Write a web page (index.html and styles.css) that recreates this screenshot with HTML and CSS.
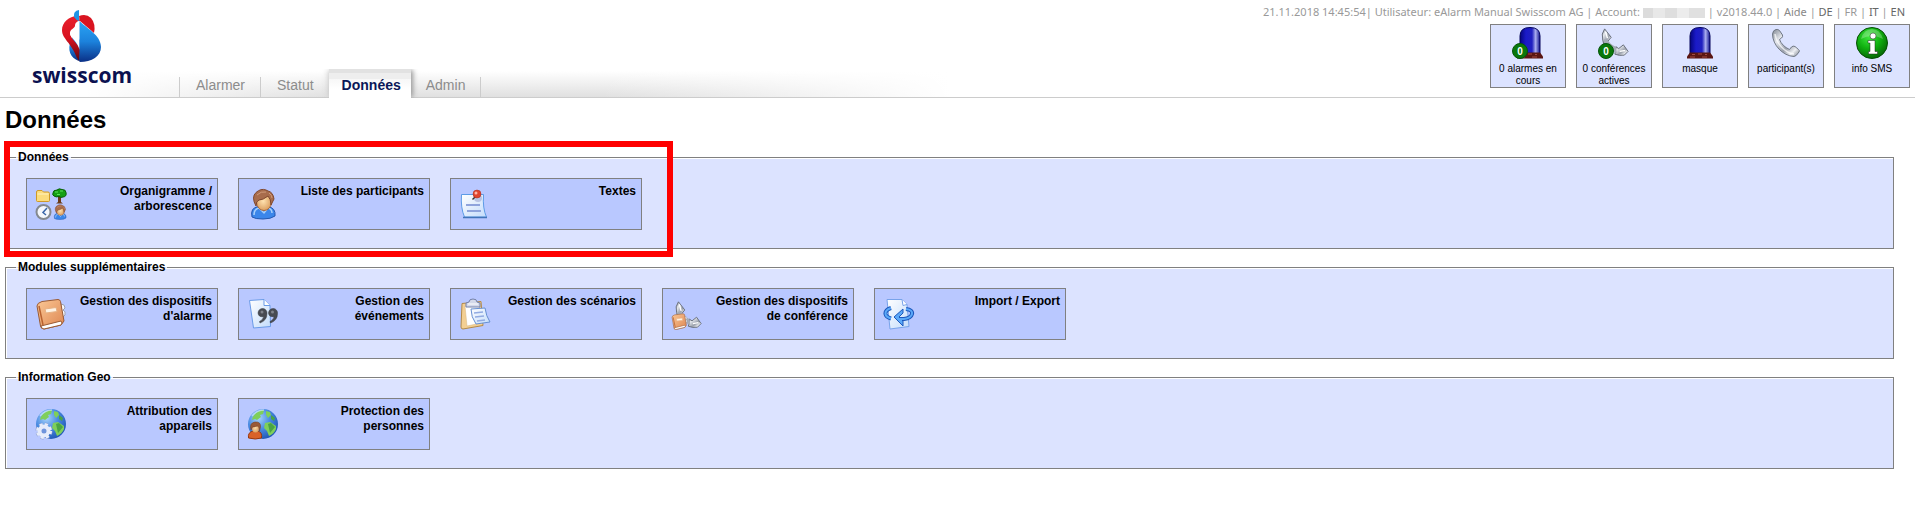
FILE: index.html
```html
<!DOCTYPE html>
<html lang="fr">
<head>
    <meta charset="UTF-8">
    <meta name="viewport" content="width=device-width, initial-scale=1.0">
    <title>eAlarm - Données</title>
    <link rel="stylesheet" href="styles.css">
</head>
<body>
    <!-- shared icon shapes -->
    <svg class="defs" width="0" height="0" aria-hidden="true">
        <defs>
            <linearGradient id="logoBlue" x1="0" y1="0" x2="0" y2="1"><stop offset="0" stop-color="#2aa5f5"/><stop offset=".5" stop-color="#1c82dc"/><stop offset="1" stop-color="#0a2f86"/></linearGradient>
            <linearGradient id="logoRed" x1="0" y1="0" x2="0" y2="1"><stop offset="0" stop-color="#e8202c"/><stop offset=".5" stop-color="#d8121f"/><stop offset="1" stop-color="#5a0710"/></linearGradient>
            <linearGradient id="lampBlue"><stop offset="0" stop-color="#06067e"/><stop offset=".3" stop-color="#1a1ac8"/><stop offset=".6" stop-color="#2020c0"/><stop offset=".78" stop-color="#a8acee"/><stop offset="1" stop-color="#10108c"/></linearGradient>
            <radialGradient id="green" cx=".4" cy=".3" r=".75"><stop offset="0" stop-color="#3fe83f"/><stop offset=".5" stop-color="#10b010"/><stop offset="1" stop-color="#046004"/></radialGradient>
            <linearGradient id="steel" x1="0" y1="0" x2="1" y2="1"><stop offset="0" stop-color="#7f8691"/><stop offset=".3" stop-color="#e4e7ec"/><stop offset=".6" stop-color="#9aa0ab"/><stop offset=".8" stop-color="#eceef2"/><stop offset="1" stop-color="#767c88"/></linearGradient>
            <linearGradient id="paper" x1="0" y1="0" x2="1" y2="1"><stop offset="0" stop-color="#ffffff"/><stop offset="1" stop-color="#c3dcfb"/></linearGradient>
            <linearGradient id="orange" x1="0" y1="0" x2="1" y2="1"><stop offset="0" stop-color="#fbc896"/><stop offset="1" stop-color="#dd8550"/></linearGradient>
            <radialGradient id="skin" cx=".45" cy=".45" r=".6"><stop offset="0" stop-color="#ffe2b0"/><stop offset="1" stop-color="#d99a5a"/></radialGradient>
            <radialGradient id="sea" cx=".35" cy=".3" r=".75"><stop offset="0" stop-color="#a9d4fb"/><stop offset=".5" stop-color="#4a8ce2"/><stop offset="1" stop-color="#1f56b4"/></radialGradient>

            <symbol id="lamp" viewBox="0 0 32 32">
                <path d="M6 27V9Q6 .500 16 .500T26 9v18z" fill="url(#lampBlue)" stroke="#04045c"/>
                <path d="M6 25.500h20l3 4v2H3v-2z" fill="#5a1612"/>
                <path d="M8 27.500h3M14 27h4M21 27.500h2M6 30h5M18 30h5" stroke="#a34a40"/>
            </symbol>
            <symbol id="phone" viewBox="0 0 32 32">
                <path d="M6 2.500Q3 3 2.500 7C2.500 18 13 29 24 29.500q2 0 5-4.500 1-1.500-.500-2.500l-3.500-3q-2-1-3.500.500l-2 2.500Q12 19 9.500 12.500l2-1.500q1.500-1 1-3L9.500 3.500Q8 2 6 2.500z" fill="url(#steel)" stroke="#707885"/>
                <path d="M5 7c1 9 10 19 19 20" fill="none" stroke="#fff" stroke-width="1.500" opacity=".7"/>
            </symbol>
            <symbol id="handset" viewBox="0 0 32 32">
                <path d="M6 2l7 9-5 6-3 1-1-4q-2-7 2-12z" fill="url(#steel)" stroke="#636a76"/>
                <path d="M18 21l3 2 5-4 5 7-4 4q-5 1-10-1z" fill="url(#steel)" stroke="#636a76"/>
                <path d="M5 13q1 9 14 15l-1-7q-7-3-9-8z" fill="#a5abb6"/>
                <path d="M7 5l2 7M22 26l6-1" stroke="#fff" stroke-width="1.500"/>
            </symbol>
            <symbol id="zero" viewBox="0 0 16 16">
                <circle cx="8" cy="8" r="7.500" fill="#0a780a" stroke="#04560a"/>
                <text x="8" y="11.500" text-anchor="middle" class="badge-text">0</text>
            </symbol>
            <symbol id="person" viewBox="0 0 32 32">
                <path d="M5 29Q3 20 11 18.500h10Q29 20 28 28q-4 3-12 3T5 29z" fill="#3b86ea" stroke="#2458b0"/>
                <path d="M7 27q0-6 5-7l5 5 4-5q4 1 4 5" fill="none" stroke="#a7cffb" stroke-width="1.500"/>
                <ellipse cx="17" cy="14" rx="7.500" ry="8.500" fill="url(#skin)" stroke="#a8683c"/>
                <path d="M9 18Q4 9 9 4.500 14 0 19 2l2 1q5 1 6 8l-3 6q0-6-3-9-5 4-9 4-3 1-3 6z" fill="#a86c4c" stroke="#80482e"/>
                <path d="M10 7q4-4 9-3M22 5q3 2 3 5" fill="none" stroke="#cf9a7a"/>
            </symbol>
            <symbol id="globe" viewBox="0 0 32 32">
                <circle cx="16" cy="16" r="15" fill="url(#sea)"/>
                <path d="M8 6Q12 2 17 2l-1 4-3 1 1 2-4 3-2-1-3 1Q5 9 8 6zM19 3l4 1 1 3-3 3-2-3zM18 15l5-1 6 4v3q-2 5-7 7l-2-5-3-3z" fill="#7fcf5a"/>
                <path d="M24 7l4 3-1 3-3-2zM21 16l3-1 4 4-5 6z" fill="#4aa544"/>
                <path d="M5 8q5-6 12-6" fill="none" stroke="#e2f3ff" stroke-width="1.500" opacity=".6"/>
            </symbol>
            <symbol id="book" viewBox="0 0 32 32">
                <path d="M26 6q4 0 4 4l-2 2q3 1 2 5l-3 3z" fill="#f7f8fc" stroke="#9a9fae"/>
                <path d="M7 3.500L23 1.500q2 0 2.500 2L29 23l-3 4-17 4q-3 0-3.500-3L2 8q0-3 5-4.500z" fill="url(#orange)" stroke="#9a5a34"/>
                <path d="M6 28l20-5 1 2-1 2-17 4q-3-.500-3-3z" fill="#fff" stroke="#9a5a34"/>
                <path d="M4 8l4 19" stroke="#b96230" stroke-width="1.500"/>
                <path d="M10 11l11-1.500 1 4-11 1.500z" fill="#fff3e4" stroke="#e6b184"/>
            </symbol>
        </defs>
    </svg>

    <header class="header">
        <a class="logo" href="#" aria-label="swisscom">
            <svg width="40" height="54" viewBox="0 0 40 54">
                <path d="M8 33C5 44 12 50 18 51V30L12 24Q9 28 8 33z" fill="url(#logoBlue)"/>
                <path d="M17 6C8 5 0 12 0 20c0 9 9 12 15 28l2 3 1-12C16 34 8 28 8 23c0-4 4-4 5-7 0-3 2-5 5-5z" fill="url(#logoRed)"/>
                <path d="M17.500 12C14 14 15 17 14 19c-2 2-6 2-6 5 1 4 8 8 9.500 16z" fill="#fff"/>
                <path d="M18 11L17 6q7-3 12 2 5 6 3 15z" fill="#d91420"/>
                <path d="M12 7q-1-6 5-7v11q-3-1-5-4z" fill="#1f95e6"/>
                <path d="M17.500 11C24 18 39 25 39 37c0 9-9 15-21.500 15z" fill="url(#logoBlue)"/>
            </svg>
            <span class="logo-text">swisscom</span>
        </a>

        <nav class="tabs">
            <a class="tab" href="#">Alarmer</a>
            <a class="tab" href="#">Statut</a>
            <a class="tab active" href="#">Données</a>
            <a class="tab" href="#">Admin</a>
        </nav>

        <div class="header-right">
            <div class="status">
                <span class="date">21.11.2018 14:45:54</span>|
                <span>Utilisateur: eAlarm Manual Swisscom AG</span> |
                <span>Account:</span> <span class="masked"></span> |
                <span>v2018.44.0</span> |
                <a href="#" class="help">Aide</a> |
                <a href="#">DE</a> | <span>FR</span> | <a href="#">IT</a> | <a href="#">EN</a>
            </div>
            <div class="shortcuts">
                <button class="shortcut" type="button">
                    <svg width="32" height="32" viewBox="0 0 32 32"><use href="#lamp" x="2" width="32" height="32"/><use href="#zero" x="0" y="16" width="16" height="16"/></svg>
                    <span>0 alarmes en cours</span>
                </button>
                <button class="shortcut" type="button">
                    <svg width="32" height="32" viewBox="0 0 32 32"><use href="#handset" x="1" width="30" height="30"/><use href="#zero" x="0" y="16" width="16" height="16"/></svg>
                    <span>0 conférences actives</span>
                </button>
                <button class="shortcut" type="button">
                    <svg width="32" height="32"><use href="#lamp"/></svg>
                    <span>masque</span>
                </button>
                <button class="shortcut" type="button">
                    <svg width="32" height="32"><use href="#phone"/></svg>
                    <span>participant(s)</span>
                </button>
                <button class="shortcut" type="button">
                    <svg width="32" height="32" viewBox="0 0 32 32">
                        <circle cx="16" cy="16" r="15.500" fill="url(#green)" stroke="#055005"/>
                        <path d="M5 12Q8 2 16 2t11 10Q16 6 5 12z" fill="#fff" opacity=".25"/>
                        <circle cx="17" cy="9" r="3" fill="#fff" stroke="#222" stroke-width=".500"/>
                        <path d="M12 13.500h7v11h2.500V27h-9v-2.500H14V16h-2z" fill="#fff" stroke="#222" stroke-width=".500"/>
                    </svg>
                    <span>info SMS</span>
                </button>
            </div>
        </div>
    </header>

    <main class="content">
        <h1>Données</h1>

        <fieldset class="group">
            <legend>Données</legend>
            <div class="tiles">
                <button class="tile" type="button">
                    <svg width="32" height="32" viewBox="0 0 32 32">
                        <path d="M1.500 4q0-1.500 1.500-1.500h4L8.500 4H13q1.500 0 1.500 1.500v7q0 1-1 1h-11q-1 0-1-1z" fill="#fbdc7c" stroke="#cf9a28"/>
                        <path d="M2.500 6h11" stroke="#fff2c0"/>
                        <path d="M23 8h3v6l2 1.500h-7l2-1.500z" fill="#6b3a16"/>
                        <path d="M18 5q0-3 4-3 2-2 5-.500 4 0 4 3 1 4-3 4.500-2 1-4-.500-3 1-5-.500-2-1-1-3z" fill="#14a014" stroke="#075e07"/>
                        <path d="M20 4h3M25 3h3M22 6.500h3" stroke="#5be05b"/>
                        <circle cx="8.500" cy="24" r="7" fill="#f4f7fc" stroke="#84898f" stroke-width="2"/>
                        <path d="M12 20l-4 4.500 3 2.500" fill="none" stroke="#3a66a8" stroke-width="1.500"/>
                        <use href="#person" x="17" y="16" width="16" height="16"/>
                    </svg>
                    <span>Organigramme / arborescence</span>
                </button>
                <button class="tile" type="button">
                    <svg width="32" height="32"><use href="#person"/></svg>
                    <span>Liste des participants</span>
                </button>
                <button class="tile" type="button">
                    <svg width="32" height="32" viewBox="0 0 32 32">
                        <path d="M2.500 6.500h22q-1 14 3 22.500h-22Q1.500 20 2.500 6.500z" fill="url(#paper)" stroke="#5c9be6"/>
                        <path d="M4 29.500h24" stroke="#4274b8" stroke-width="1.500"/>
                        <circle cx="19" cy="10" r="4" fill="#b9c4e4"/>
                        <path d="M7 17h14M8 23h14" stroke="#8fa4dc" stroke-width="2"/>
                        <path d="M13.500 11.500l4-4" stroke="#333" stroke-width="1.500"/>
                        <circle cx="18" cy="6" r="4" fill="#e0442e" stroke="#a92a1c" stroke-width=".500"/>
                        <circle cx="17" cy="5" r="1.500" fill="#ffb4a4"/>
                    </svg>
                    <span>Textes</span>
                </button>
            </div>
            <div class="highlight"></div>
        </fieldset>

        <fieldset class="group">
            <legend>Modules supplémentaires</legend>
            <div class="tiles">
                <button class="tile" type="button">
                    <svg width="32" height="32"><use href="#book"/></svg>
                    <span>Gestion des dispositifs d'alarme</span>
                </button>
                <button class="tile" type="button">
                    <svg width="32" height="32" viewBox="0 0 32 32">
                        <path d="M2.500 2.500L17 1.500l6 6 .500 21-17 1.500z" fill="url(#paper)" stroke="#6a9be8"/>
                        <path d="M17 1.500v6h6" fill="#fff" stroke="#6a9be8"/>
                        <path d="M16 10.500a4.500 4.500 0 0 1 4 5q0 7-7 9.500l-.500-1.500q4-2 4-5-5 1-5.500-3.500.500-4.500 5-4.500zM26.500 10.500a4.500 4.500 0 0 1 4 5q0 7-7 9.500l-.500-1.500q4-2 4-5-5 1-5.500-3.500.500-4.500 5-4.500z" fill="#484b52" stroke="#33363b" stroke-width=".500"/>
                        <circle cx="15" cy="14" r="1.500" fill="#80838b"/><circle cx="25.500" cy="14" r="1.500" fill="#80838b"/>
                    </svg>
                    <span>Gestion des événements</span>
                </button>
                <button class="tile" type="button">
                    <svg width="32" height="32" viewBox="0 0 32 32">
                        <path d="M3 5.500L22 3.500l2 24-20 3.500q-2 0-2-2z" fill="#f3cf93" stroke="#b48a48"/>
                        <path d="M6 8l14-1 2 18-14 3z" fill="#fff" stroke="#d4b582" stroke-width=".500"/>
                        <path d="M7 9V5l3-1q0-3 4-3t4 3l3 1v4z" fill="#d3d9ea" stroke="#7481aa"/>
                        <path d="M9 6h10" stroke="#fff"/>
                        <path d="M12 11l14-1q1 8 5 14l-14 2q-5-7-5-15z" fill="url(#paper)" stroke="#6790d2"/>
                        <path d="M15 15l9-1M16 19l9-1M18 23l8-1" stroke="#92abe2" stroke-width="1.500"/>
                    </svg>
                    <span>Gestion des scénarios</span>
                </button>
                <button class="tile" type="button">
                    <svg width="32" height="32" viewBox="0 0 32 32"><use href="#handset" x="2" y="2" width="29" height="29"/><use href="#book" y="15" width="17" height="17"/></svg>
                    <span>Gestion des dispositifs de conférence</span>
                </button>
                <button class="tile" type="button">
                    <svg width="32" height="32" viewBox="0 0 32 32">
                        <path d="M4 1.500h15l5 5 2 22-19 2.500z" fill="url(#paper)" stroke="#78a3ea"/>
                        <path d="M19 1.500l1 6 4-1" fill="#fff" stroke="#78a3ea"/>
                        <path d="M8 10q-6 2-5.500 6 .500 3 5.500 4.500M23 11q7 1 6 5-1 4-8 5h-4" fill="none" stroke="#1d58bc" stroke-width="4"/>
                        <path d="M11 19l9-8v4l-4 4 4 4v5z" fill="#5aa8f8" stroke="#1d58bc"/>
                        <path d="M8 10q-6 2-5.500 6 .500 3 5.500 4.500M23 11q7 1 6 5-1 4-8 5h-4" fill="none" stroke="#5aa8f8" stroke-width="2"/>
                    </svg>
                    <span>Import / Export</span>
                </button>
            </div>
        </fieldset>

        <fieldset class="group">
            <legend>Information Geo</legend>
            <div class="tiles">
                <button class="tile" type="button">
                    <svg width="32" height="32" viewBox="0 0 32 32">
                        <use href="#globe"/>
                        <circle cx="9" cy="23" r="6.500" fill="none" stroke="#8b9ccd" stroke-width="4" stroke-dasharray="3 2.100"/>
                        <circle cx="9" cy="23" r="6.500" fill="none" stroke="#e6ecfb" stroke-width="3" stroke-dasharray="3 2.100"/>
                        <circle cx="9" cy="23" r="4.500" fill="#6f94dc" stroke="#e6ecfb" stroke-width="4"/>
                    </svg>
                    <span>Attribution des appareils</span>
                </button>
                <button class="tile" type="button">
                    <svg width="32" height="32" viewBox="0 0 32 32">
                        <use href="#globe"/>
                        <path d="M1.500 30q-1-6 5-7h4q5 1 4 7-6 2-13 0z" fill="#d9622a" stroke="#97380f"/>
                        <ellipse cx="8.500" cy="20" rx="3.500" ry="4.500" fill="url(#skin)"/>
                        <path d="M4 22q-2-7 4-8 6-.500 5.500 5L12.500 23q0-4-2-5-3 1-5 1z" fill="#9a5a36" stroke="#70391c" stroke-width=".500"/>
                    </svg>
                    <span>Protection des personnes</span>
                </button>
            </div>
        </fieldset>
    </main>
</body>
</html>
```
FILE: styles.css
```css
body {
    margin: 0;
    background: #fff;
    color: #000;
    font-family: "Liberation Sans", Arial, sans-serif;
    font-size: 12px;
}
a {
    text-decoration: none;
}
button {
    font-family: inherit;
    color: inherit;
    cursor: pointer;
}
.defs {
    position: absolute;
}

/* header */
.header {
    display: flex;
    height: 97px;
    border-bottom: 1px solid #ccc;
    background:
        linear-gradient(to right, #fff 86px, rgba(255,255,255,0) 330px, rgba(255,255,255,0) 600px, #fff 950px),
        linear-gradient(to top, #e0e0e0, #fff 26px);
}
.logo {
    display: flex;
    flex-direction: column;
    align-items: center;
    width: 100px;
    padding-top: 10px;
    margin: 0 47px 0 32px;
}
.logo svg {
    flex: none;
}
.logo-text {
    font: 700 21px/22px "Open Sans", sans-serif;
    color: #0b1150;
}
.tabs {
    display: flex;
    align-items: flex-end;
}
.tab {
    padding: 0 15px 4px 16px;
    border-left: 1px solid #ccc;
    font-size: 14px;
    line-height: 16px;
    color: #8c8c8c;
}
.tab:last-child {
    border-right: 1px solid #ccc;
}
.tab.active {
    position: relative;
    padding: 8px 10px 5px 13px;
    margin-bottom: -1px;
    border: 0;
    background: linear-gradient(#e2e2e2 4px, #eee 4px, #eee 10px, #f7f7f7 10px, #fff 20px);
    box-shadow: 3px 0 5px -1px #999, -2px 0 6px -1px #ccc;
    clip-path: inset(0 -10px 0 -10px);
    font-weight: bold;
    color: #0b1758;
}
.tab.active + .tab {
    padding-left: 15px;
    border-left: 0;
}
.header-right {
    margin-left: auto;
    padding: 4px 5px 0 0;
}
.status {
    height: 20px;
    padding-right: 5px;
    font: 11px/16px "Noto Sans", sans-serif;
    color: #999;
    text-align: right;
    white-space: nowrap;
}
.status a {
    color: #666;
}
.status .help {
    color: #888;
}
.masked {
    display: inline-block;
    width: 62px;
    height: 10px;
    vertical-align: -2px;
    background: linear-gradient(to right, #dcdcdc 10px, #e8e8e8 10px, #e8e8e8 22px, #dedede 22px, #dedede 34px, #ececec 34px, #ececec 46px, #e0e0e0 46px);
}
.shortcuts {
    display: flex;
    justify-content: flex-end;
    gap: 10px;
}
.shortcut {
    display: flex;
    flex-direction: column;
    align-items: center;
    width: 76px;
    height: 64px;
    padding: 2px 4px 0;
    border: 1px solid #808080;
    background: #dce3ff;
    font-size: 10px;
    line-height: 12px;
}
.shortcut svg {
    flex: none;
    margin-bottom: 4px;
}
.badge-text {
    font: bold 10px "Liberation Sans", sans-serif;
    fill: #fff;
}

/* groups of tiles */
.content {
    padding: 8px 21px 8px 5px;
}
h1 {
    margin: 0 0 16px;
    font-size: 24px;
    line-height: 28px;
}
.group {
    position: relative;
    margin: 0 0 11px;
    padding: 14px 20px 18px;
    border: 1px solid #808080;
    background: #dce3ff;
    box-shadow: inset 1px 1px #fff;
}
.group legend {
    margin-left: -10px;
    padding: 0 2px;
    font-weight: bold;
    line-height: 14px;
}
.tiles {
    display: flex;
    flex-wrap: wrap;
    gap: 20px;
}
.tile {
    display: flex;
    align-items: center;
    justify-content: space-between;
    width: 192px;
    height: 52px;
    padding: 0 5px 0 8px;
    border: 1px solid #808080;
    background: #b9c8ff;
    font-size: 12px;
    font-weight: bold;
    line-height: 15px;
    text-align: right;
}
.tile svg {
    flex: none;
}
.tile span {
    align-self: flex-start;
    max-width: 134px;
    padding-top: 5px;
}
.highlight {
    position: absolute;
    top: -23px;
    left: -2px;
    box-sizing: border-box;
    width: 669px;
    height: 116px;
    border: 6px solid #f00;
    pointer-events: none;
}
```
